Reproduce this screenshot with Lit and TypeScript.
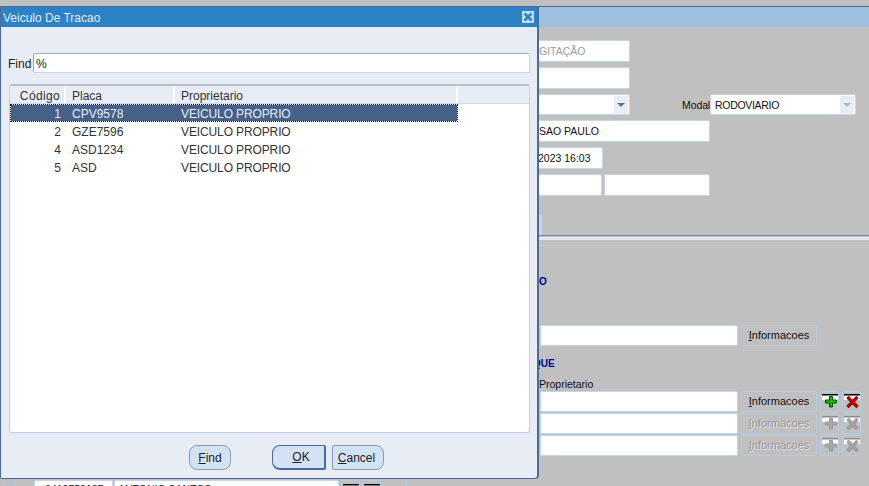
import { LitElement, html, css, svg } from "lit";
import { customElement } from "lit/decorators.js";

const bar = (on: boolean) => svg`
  <rect x="1" y="3" width="16" height="5" fill="#fff"/>
  <rect x="1" y="2" width="16" height="1.5" fill="${on ? "#000" : "#8c8c8c"}"/>`;
const plus = (on: boolean) => svg`
  ${bar(on)}
  <path d="M8.5 4.5h3v3.5h4v3h-4v4h-3v-4h-4v-3h4z" fill="${on ? "#00c000" : "#a8a8a8"}" stroke="${on ? "#004c00" : "#989898"}" stroke-width="1"/>`;
const cross = (on: boolean) => svg`
  ${bar(on)}
  <path d="M4.5 5l10 10M14.5 5l-10 10" fill="none" stroke="${on ? "#6a0000" : "#8e8e8e"}" stroke-width="3.2"/>
  <path d="M4.5 5l10 10M14.5 5l-10 10" fill="none" stroke="${on ? "#d40000" : "#a6a6a6"}" stroke-width="1.8"/>`;

@customElement("app-root")
export class AppRoot extends LitElement {
  static styles = css`
    :host { display: block; position: relative; width: 869px; height: 486px; overflow: hidden; font-family: "Liberation Sans", Arial, sans-serif; font-size: 10.5px; color: #111; }
    .bg { display: flex; flex-direction: column; width: 869px; height: 486px; background: #c0c0c0; overflow: hidden; }
    .bar { flex: none; height: 20px; margin-top: 6px; border-top: 1px solid #4a6a9a; background: #9fc0de; }
    .form { flex: none; display: flex; flex-direction: column; gap: 5px; margin: 13px 0 0 538px; }
    .row { display: flex; gap: 2px; height: 22px; align-items: stretch; }
    .row.short { height: 21px; }
    .field { box-sizing: border-box; display: flex; align-items: center; background: #fff; border: 1px solid #c6d6ea; border-radius: 2px; white-space: nowrap; overflow: hidden; }
    .w92 { width: 92px; } .w172 { width: 172px; } .w65 { width: 65px; } .w64 { width: 64px; } .w106 { width: 106px; }
    .muted { color: #9a9a9a; }
    .tight { text-indent: -1px; }
    .select { position: relative; }
    .arrow { position: absolute; right: 1px; top: 1px; bottom: 1px; width: 14px; background: #e8edf5; display: flex; align-items: center; justify-content: center; }
    .arrow i { width: 0; height: 0; border-left: 4px solid transparent; border-right: 4px solid transparent; border-top: 4px solid #6c7480; }
    .arrow.off i { border-top-color: #b4b8c0; }
    .modal { margin-left: 50px; display: flex; align-items: center; width: 26px; white-space: nowrap; letter-spacing: -.1px; }
    .sel2 { width: 146px; padding-left: 4px; letter-spacing: -.3px; }
    .tabs { flex: none; height: 21px; margin-top: 18px; }
    .tab { width: 4px; height: 21px; margin-left: 538px; background: #c6d6ea; border-top-right-radius: 3px; }
    .rule { flex: none; height: 9px; border-top: 1px solid #6a86aa; border-bottom: 1px solid #b8cce0; background: linear-gradient(#c0c0c0 0 1px, #e6e6e6 1px 4px, #c0c0c0 4px); }
    .head { flex: none; margin-left: 539px; color: #00008c; font-weight: bold; font-size: 10px; line-height: 12px; }
    .h1 { margin-top: 30px; }
    .lower { flex: none; margin-left: 540px; display: grid; grid-template-columns: 198px 76px 19px 19px; column-gap: 3px; align-items: stretch; }
    .l1 { margin-top: 37px; height: 21px; }
    .h2 { margin-top: 12px; margin-left: 533px; }
    .prop { flex: none; margin: 8px 0 0 539px; line-height: 12px; }
    .l2 { margin-top: 1px; row-gap: 1px; grid-auto-rows: 21px; }
    .ib { box-sizing: border-box; display: flex; align-items: center; justify-content: center; padding-bottom: 1px; border: 1px solid #b8cce0; border-radius: 2px; font-size: 11px; background: #c0c0c0; color: #111; }
    .ib u { text-underline-offset: 1px; }
    .ib.off { color: #989898; text-shadow: 1px 1px 0 #dfe4ea; }
    .icon { box-sizing: border-box; border: 1px solid #b8cce0; border-radius: 2px; display: block; }
    .icon svg { display: block; }
    .bottom { flex: none; margin-top: 24px; margin-left: 6px; display: flex; height: 21px; }
    .stub { width: 7px; background: #b4c0cc; }
    .bottom .f1 { width: 79px; margin-left: 21px; padding-left: 10px; align-items: flex-start; padding-top: 2px; }
    .bottom .f2 { width: 225px; margin-left: 1px; padding-left: 3px; align-items: flex-start; padding-top: 2px; }
    .bottom .icon { width: 19px; margin-left: 2px; padding-top: 1px; }
    .bottom .line { width: 1px; margin-left: 25px; background: #b8cce0; }

    .dialog { position: absolute; left: 0; top: 6px; box-sizing: border-box; width: 539px; height: 473px; display: flex; flex-direction: column; background: #e8edf5; border: 1px solid #4a6a9a; border-right-width: 2px; border-radius: 2px 0 4px 2px; font-size: 12px; color: #222; }
    .title { flex: none; box-sizing: border-box; height: 20px; display: flex; align-items: center; justify-content: space-between; padding: 0 3px 0 2px; background: #2b82c4; color: #e4eef8; }
    .title span:first-child { padding-top: 2px; }
    .close { width: 12px; height: 12px; background: #c4dcf0; display: flex; }
    .find { flex: none; display: flex; align-items: center; height: 20px; margin: 26px 7px 0 7px; }
    .find label { width: 25px; margin-top: 2px; }
    .input { box-sizing: border-box; flex: 1; height: 20px; background: #fff; border: 1px solid #c6d6ea; border-top-color: #a2aab8; border-left-color: #a2aab8; border-radius: 2px; padding-left: 2px; line-height: 20px; color: #222; }
    .table { box-sizing: border-box; flex: none; height: 349px; margin: 11px 7px 0 8px; background: #fff; border: 1px solid #c0d0e4; border-top: 2px solid #b4bfce; border-radius: 3px; overflow: hidden; }
    .grid { display: grid; grid-template-columns: 56px 109px 283px 1fr; }
    .hdr { height: 18px; background: #e8edf5; border-bottom: 1px solid #d0dcea; box-sizing: border-box; }
    .hdr div { border-right: 2px solid #fff; box-sizing: border-box; padding-left: 6px; line-height: 20px; height: 17px; color: #333; white-space: nowrap; }
    .hdr div:last-child { border-right: 0; }
    .hdr div.num { padding: 0 4px 0 0; text-align: right; letter-spacing: .35px; }
    .tr { height: 18px; line-height: 18px; width: 448px; grid-template-columns: 55px 109px 283px; box-sizing: border-box; border: 1px solid transparent; color: #333; }
    .tr div { padding-left: 6px; height: 16px; white-space: nowrap; }
    .tr div.num { padding: 0 5px 0 0; text-align: right; }
    .tr div.own { letter-spacing: -.12px; }
    .tr.sel { color: #e8edf5; border: 1px dotted #000; background: linear-gradient(#46628a, #46628a) padding-box, #fff; }
    .foot { flex: none; display: flex; align-items: center; height: 25px; margin: 12px 0 0 188px; }
    .btn { box-sizing: border-box; height: 25px; display: flex; align-items: center; justify-content: center; background: #d3e3f3; border: 1px solid #8c9cb4; border-radius: 8px; color: #222; }
    .btn u { text-underline-offset: 1px; }
    .b1 { width: 42px; }
    .b2 { width: 54px; margin-left: 41px; padding-left: 5px; border: 1px solid #4a6a9a; border-right-width: 2px; border-bottom-width: 2px; border-radius: 8px 2px 2px 8px; }
    .b3 { width: 52px; margin-left: 6px; padding-right: 3px; border-radius: 2px 8px 8px 2px; }
  `;

  private info(off = false) {
    return html`<div class="ib ${off ? "off" : ""}"><span><u>I</u>nformacoes</span></div>`;
  }
  private icon(kind: "p" | "x", on: boolean) {
    return html`<div class="icon"><svg width="17" height="19" viewBox="0 0 17 19">${kind === "p" ? plus(on) : cross(on)}</svg></div>`;
  }

  render() {
    const rows = [
      ["1", "CPV9578"],
      ["2", "GZE7596"],
      ["4", "ASD1234"],
      ["5", "ASD"],
    ];
    return html`
      <div class="bg">
        <div class="bar"></div>
        <div class="form">
          <div class="row"><div class="field w92 muted">GITAÇÃO</div></div>
          <div class="row"><div class="field w92"></div></div>
          <div class="row short">
            <div class="field w92 select"><span class="arrow"><i></i></span></div>
            <div class="modal">Modal</div>
            <div class="field sel2 select">RODOVIARIO<span class="arrow off"><i></i></span></div>
          </div>
          <div class="row"><div class="field w172">SAO PAULO</div></div>
          <div class="row"><div class="field w65 tight">2023 16:03</div></div>
          <div class="row"><div class="field w64"></div><div class="field w106"></div></div>
        </div>
        <div class="tabs"><div class="tab"></div></div>
        <div class="rule"></div>
        <div class="head h1">O</div>
        <div class="lower l1"><div class="field"></div>${this.info()}</div>
        <div class="head h2">QUE</div>
        <div class="prop">Proprietario</div>
        <div class="lower l2">
          <div class="field"></div>${this.info()}${this.icon("p", true)}${this.icon("x", true)}
          <div class="field"></div>${this.info(true)}${this.icon("p", false)}${this.icon("x", false)}
          <div class="field"></div>${this.info(true)}${this.icon("p", false)}${this.icon("x", false)}
        </div>
        <div class="bottom">
          <div class="stub"></div>
          <div class="field f1">0410750187</div>
          <div class="field f2">ANTONIO SANTOS</div>
          ${this.icon("p", true)}${this.icon("x", true)}
          <div class="line"></div>
        </div>
      </div>

      <div class="dialog">
        <div class="title">
          <span>Veiculo De Tracao</span>
          <span class="close"><svg width="12" height="12" viewBox="0 0 12 12"><path d="M2.5 2.5l7 7M9.5 2.5l-7 7" stroke="#2b82c4" stroke-width="2.5"/></svg></span>
        </div>
        <div class="find"><label>Find</label><div class="input">%</div></div>
        <div class="table">
          <div class="grid hdr">
            <div class="num">Código</div><div>Placa</div><div>Proprietario</div><div></div>
          </div>
          ${rows.map(
            (r, i) => html`<div class="grid tr ${i === 0 ? "sel" : ""}">
              <div class="num">${r[0]}</div><div>${r[1]}</div><div class="own">VEICULO PROPRIO</div>
            </div>`
          )}
        </div>
        <div class="foot">
          <div class="btn b1"><span><u>F</u>ind</span></div>
          <div class="btn b2"><span><u>O</u>K</span></div>
          <div class="btn b3"><span><u>C</u>ancel</span></div>
        </div>
      </div>
    `;
  }
}
